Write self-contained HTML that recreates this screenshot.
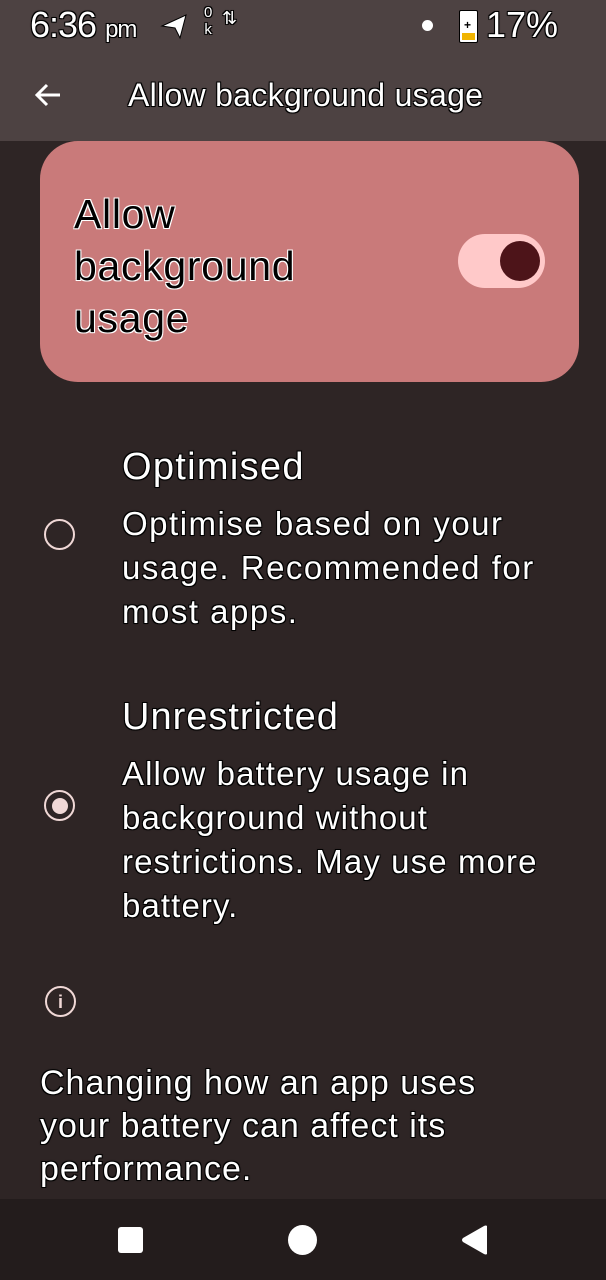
<!DOCTYPE html>
<html><head><meta charset="utf-8"><style>
html,body{margin:0;padding:0}
body{width:606px;height:1280px;position:relative;overflow:hidden;background:#2e2525;font-family:"Liberation Sans",sans-serif;color:#fff}
.t{position:absolute;white-space:nowrap;text-shadow:-1px -1px 0 #000,1px -1px 0 #000,-1px 1px 0 #000,1px 1px 0 #000,0 0 2px #000}
.tb{position:absolute;white-space:nowrap;color:#000;text-shadow:-1px -1px 0 #fff,1px -1px 0 #fff,-1px 1px 0 #fff,1px 1px 0 #fff}
</style></head><body>
<div style="position:absolute;left:0;top:0;width:606px;height:141px;background:#4d4242"></div>
<div class="t" style="left:30px;top:4px;font-size:36px;letter-spacing:-1px">6:36 <span style="font-size:24px">pm</span></div>
<svg style="position:absolute;left:160px;top:12px" width="28" height="28" viewBox="0 0 28 28"><path d="M2 14 L26 3 L20 26 L15 16 Z" fill="#fff" stroke="#000" stroke-width="1"/></svg>
<div class="t" style="left:204px;top:4px;font-size:15px;line-height:17px;text-align:center">0<br>k</div>
<div class="t" style="left:222px;top:8px;font-size:18px">⇅</div>
<div style="position:absolute;left:422px;top:20px;width:11px;height:11px;border-radius:50%;background:#fff"></div>
<div style="position:absolute;left:459px;top:10px;width:17px;height:31px;background:#fff;border:1px solid #000;border-radius:2px"><div style="position:absolute;left:2px;right:2px;bottom:2px;height:7px;background:#f0b400"></div><div style="position:absolute;left:4px;top:8px;font-size:12px;color:#000;font-weight:bold;line-height:12px">+</div></div>
<div class="t" style="left:486px;top:4px;font-size:36px">17%</div>
<svg style="position:absolute;left:33px;top:82px" width="30" height="26" viewBox="0 0 30 26"><path d="M27 13 H4 M14 3 L4 13 L14 23" stroke="#fff" stroke-width="3" fill="none"/></svg>
<div class="t" style="left:128px;top:77px;font-size:32px;letter-spacing:0.3px">Allow background usage</div>

<div style="position:absolute;left:40px;top:141px;width:539px;height:241px;background:#c97a7a;border-radius:38px"></div>
<div class="tb" style="left:74px;top:188px;font-size:41px;line-height:52px;letter-spacing:0.7px">Allow<br>background<br>usage</div>
<div style="position:absolute;left:458px;top:234px;width:87px;height:54px;background:#ffc9c9;border-radius:27px"></div>
<div style="position:absolute;left:500px;top:241px;width:40px;height:40px;background:#4d1419;border-radius:50%"></div>

<div class="t" style="left:122px;top:446px;font-size:38px;letter-spacing:1.3px">Optimised</div>
<div class="t" style="left:122px;top:502px;font-size:33px;line-height:44px;letter-spacing:1.5px">Optimise based on your<br>usage. Recommended for<br>most apps.</div>
<div style="position:absolute;left:44px;top:519px;width:27px;height:27px;border:2.5px solid #f0d8d6;border-radius:50%"></div>

<div class="t" style="left:122px;top:696px;font-size:38px;letter-spacing:1px">Unrestricted</div>
<div class="t" style="left:122px;top:752px;font-size:33px;line-height:44px;letter-spacing:1.1px">Allow battery usage in<br>background without<br>restrictions. May use more<br>battery.</div>
<div style="position:absolute;left:44px;top:790px;width:27px;height:27px;border:2.5px solid #f0d8d6;border-radius:50%"></div>
<div style="position:absolute;left:52px;top:798px;width:16px;height:16px;background:#f0d8d6;border-radius:50%"></div>

<div style="position:absolute;left:45px;top:986px;width:27px;height:27px;border:2.5px solid #f0d8d6;border-radius:50%;color:#f0d8d6;font-size:18px;font-weight:bold;text-align:center;line-height:28px">i</div>
<div class="t" style="left:40px;top:1062px;font-size:34px;line-height:43px;letter-spacing:1px">Changing how an app uses<br>your battery can affect its<br>performance.</div>

<div style="position:absolute;left:0;top:1199px;width:606px;height:81px;background:#231c1c"></div>
<div style="position:absolute;left:118px;top:1227px;width:25px;height:26px;background:#fff;border-radius:3px"></div>
<div style="position:absolute;left:288px;top:1225px;width:29px;height:30px;background:#fff;border-radius:50%"></div>
<svg style="position:absolute;left:460px;top:1224px" width="30" height="32" viewBox="0 0 30 32"><path d="M27 2 L27 30 Q26 31 24 30 L3 18 Q1 16 3 14 L24 2 Q26 1 27 2Z" fill="#fff"/></svg>
</body></html>
